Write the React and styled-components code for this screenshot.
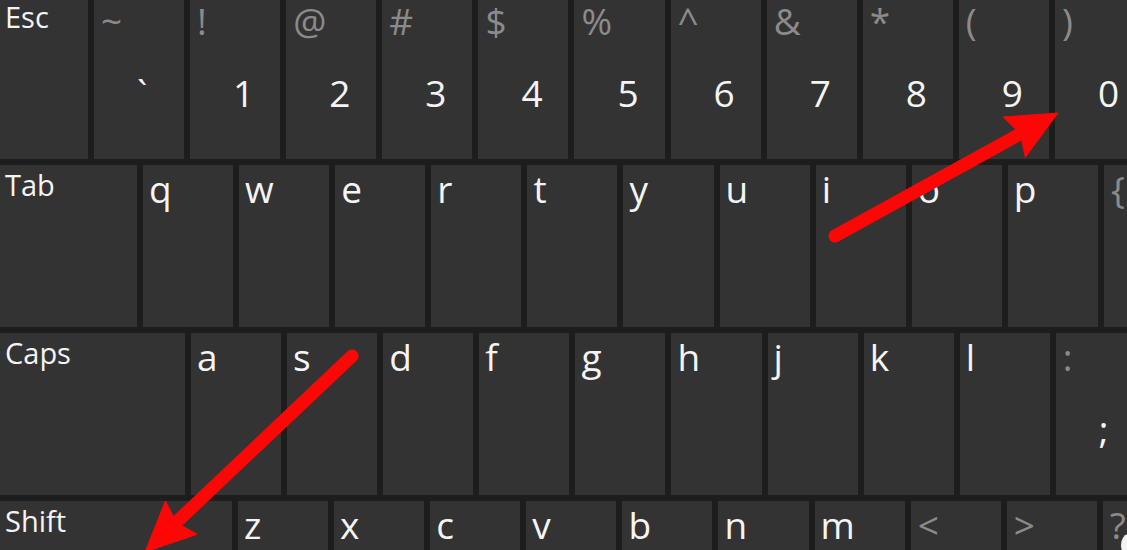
import React from 'react'
import styled, { createGlobalStyle } from 'styled-components'

const GlobalStyle = createGlobalStyle`
  html, body {
    margin: 0;
    padding: 0;
    background: #1d1d1d;
    overflow: hidden;
  }
  body {
    font-family: "Open Sans", "Noto Sans", sans-serif;
  }
`

const Screen = styled.div`
  position: relative;
  width: 1127px;
  height: 550px;
  overflow: hidden;
  background: #1d1d1d;
`

const Board = styled.div`
  display: flex;
  flex-direction: column;
  gap: 6px;
`

const Row = styled.div`
  display: flex;
  gap: 6px;
  height: ${props => props.$h}px;
`

const Key = styled.div`
  flex: 0 0 ${props => props.$w}px;
  height: 100%;
  box-sizing: border-box;
  padding: ${props => props.$top}px 0 0 6px;
  background: #333333;
  display: flex;
  flex-direction: column;
  align-items: flex-start;
`

const Label = styled.span`
  font-size: 29px;
  line-height: 29px;
  color: #f4f4f4;
  margin-left: -1px;
`

const Letter = styled.span`
  font-size: 37px;
  line-height: 37px;
  color: #f4f4f4;
`

const Shifted = styled.span`
  font-size: 37px;
  line-height: 37px;
  color: #8b8b8b;
  margin-left: 1px;
`

const Primary = styled.span`
  font-size: 37px;
  line-height: 37px;
  color: #f4f4f4;
  margin: 35px 0 0 37px;
`

const Overlay = styled.svg`
  position: absolute;
  left: 0;
  top: 0;
  pointer-events: none;
`

const Blob = styled.div`
  position: absolute;
  left: 1121px;
  top: 534px;
  width: 16px;
  height: 22px;
  border-radius: 50%;
  background: #f2f2f2;
`

const KEY_W = 90.1

const dual = pairs => pairs.map(([top, main]) => ({ top, main }))
const letters = str => str.split('').map(c => ({ letter: c }))

const rows = [
  {
    h: 159,
    pad: 2,
    keys: [
      { label: 'Esc', w: 88 },
      ...dual([['~', '`'], ['!', '1'], ['@', '2'], ['#', '3'], ['$', '4'], ['%', '5'],
        ['^', '6'], ['&', '7'], ['*', '8'], ['(', '9'], [')', '0']])
    ]
  },
  {
    h: 162,
    pad: 5,
    keys: [
      { label: 'Tab', w: 137 },
      ...letters('qwertyuiop'),
      ...dual([['{', '['], ['}', ']']])
    ]
  },
  {
    h: 162,
    pad: 5,
    keys: [
      { label: 'Caps', w: 185 },
      ...letters('asdfghjkl'),
      ...dual([[':', ';'], ['"', "'"]])
    ]
  },
  {
    h: 162,
    pad: 5,
    keys: [
      { label: 'Shift', w: 232 },
      ...letters('zxcvbnm'),
      ...dual([['<', ','], ['>', '.'], ['?', '/']])
    ]
  }
]

// arrow drawn from a start point to a tip, head as a swept triangle
const Arrow = ({ from, tip }) => {
  const dx = tip[0] - from[0]
  const dy = tip[1] - from[1]
  const len = Math.hypot(dx, dy)
  const ux = dx / len
  const uy = dy / len
  const nx = -uy
  const ny = ux
  const headLen = 50
  const half = 23
  const bx = tip[0] - ux * headLen
  const by = tip[1] - uy * headLen
  const pts = [
    [tip[0], tip[1]],
    [bx + nx * half, by + ny * half],
    [bx + ux * 7, by + uy * 7],
    [bx - nx * half, by - ny * half]
  ].map(p => p.join(',')).join(' ')
  return (
    <g fill="#ff0606" stroke="#ff0606">
      <line x1={from[0]} y1={from[1]} x2={bx + ux * 10} y2={by + uy * 10}
        strokeWidth="13" strokeLinecap="round" />
      <polygon points={pts} strokeWidth="1" strokeLinejoin="round" />
    </g>
  )
}

const renderKey = pad => (k, i) => {
  if (k.label) {
    return <Key key={i} $w={k.w} $top={pad}><Label>{k.label}</Label></Key>
  }
  if (k.letter) {
    return <Key key={i} $w={KEY_W} $top={pad}><Letter>{k.letter}</Letter></Key>
  }
  return (
    <Key key={i} $w={KEY_W} $top={pad}>
      <Shifted>{k.top}</Shifted>
      <Primary>{k.main}</Primary>
    </Key>
  )
}

const App = () => (
  <Screen>
    <GlobalStyle />
    <Board>
      {rows.map((row, r) => (
        <Row key={r} $h={row.h}>{row.keys.map(renderKey(row.pad))}</Row>
      ))}
    </Board>
    <Overlay width="1127" height="550" viewBox="0 0 1127 550">
      <Arrow from={[835, 236]} tip={[1058, 113]} />
      <Arrow from={[352, 356]} tip={[145, 552]} />
    </Overlay>
    <Blob />
  </Screen>
)

export default App
